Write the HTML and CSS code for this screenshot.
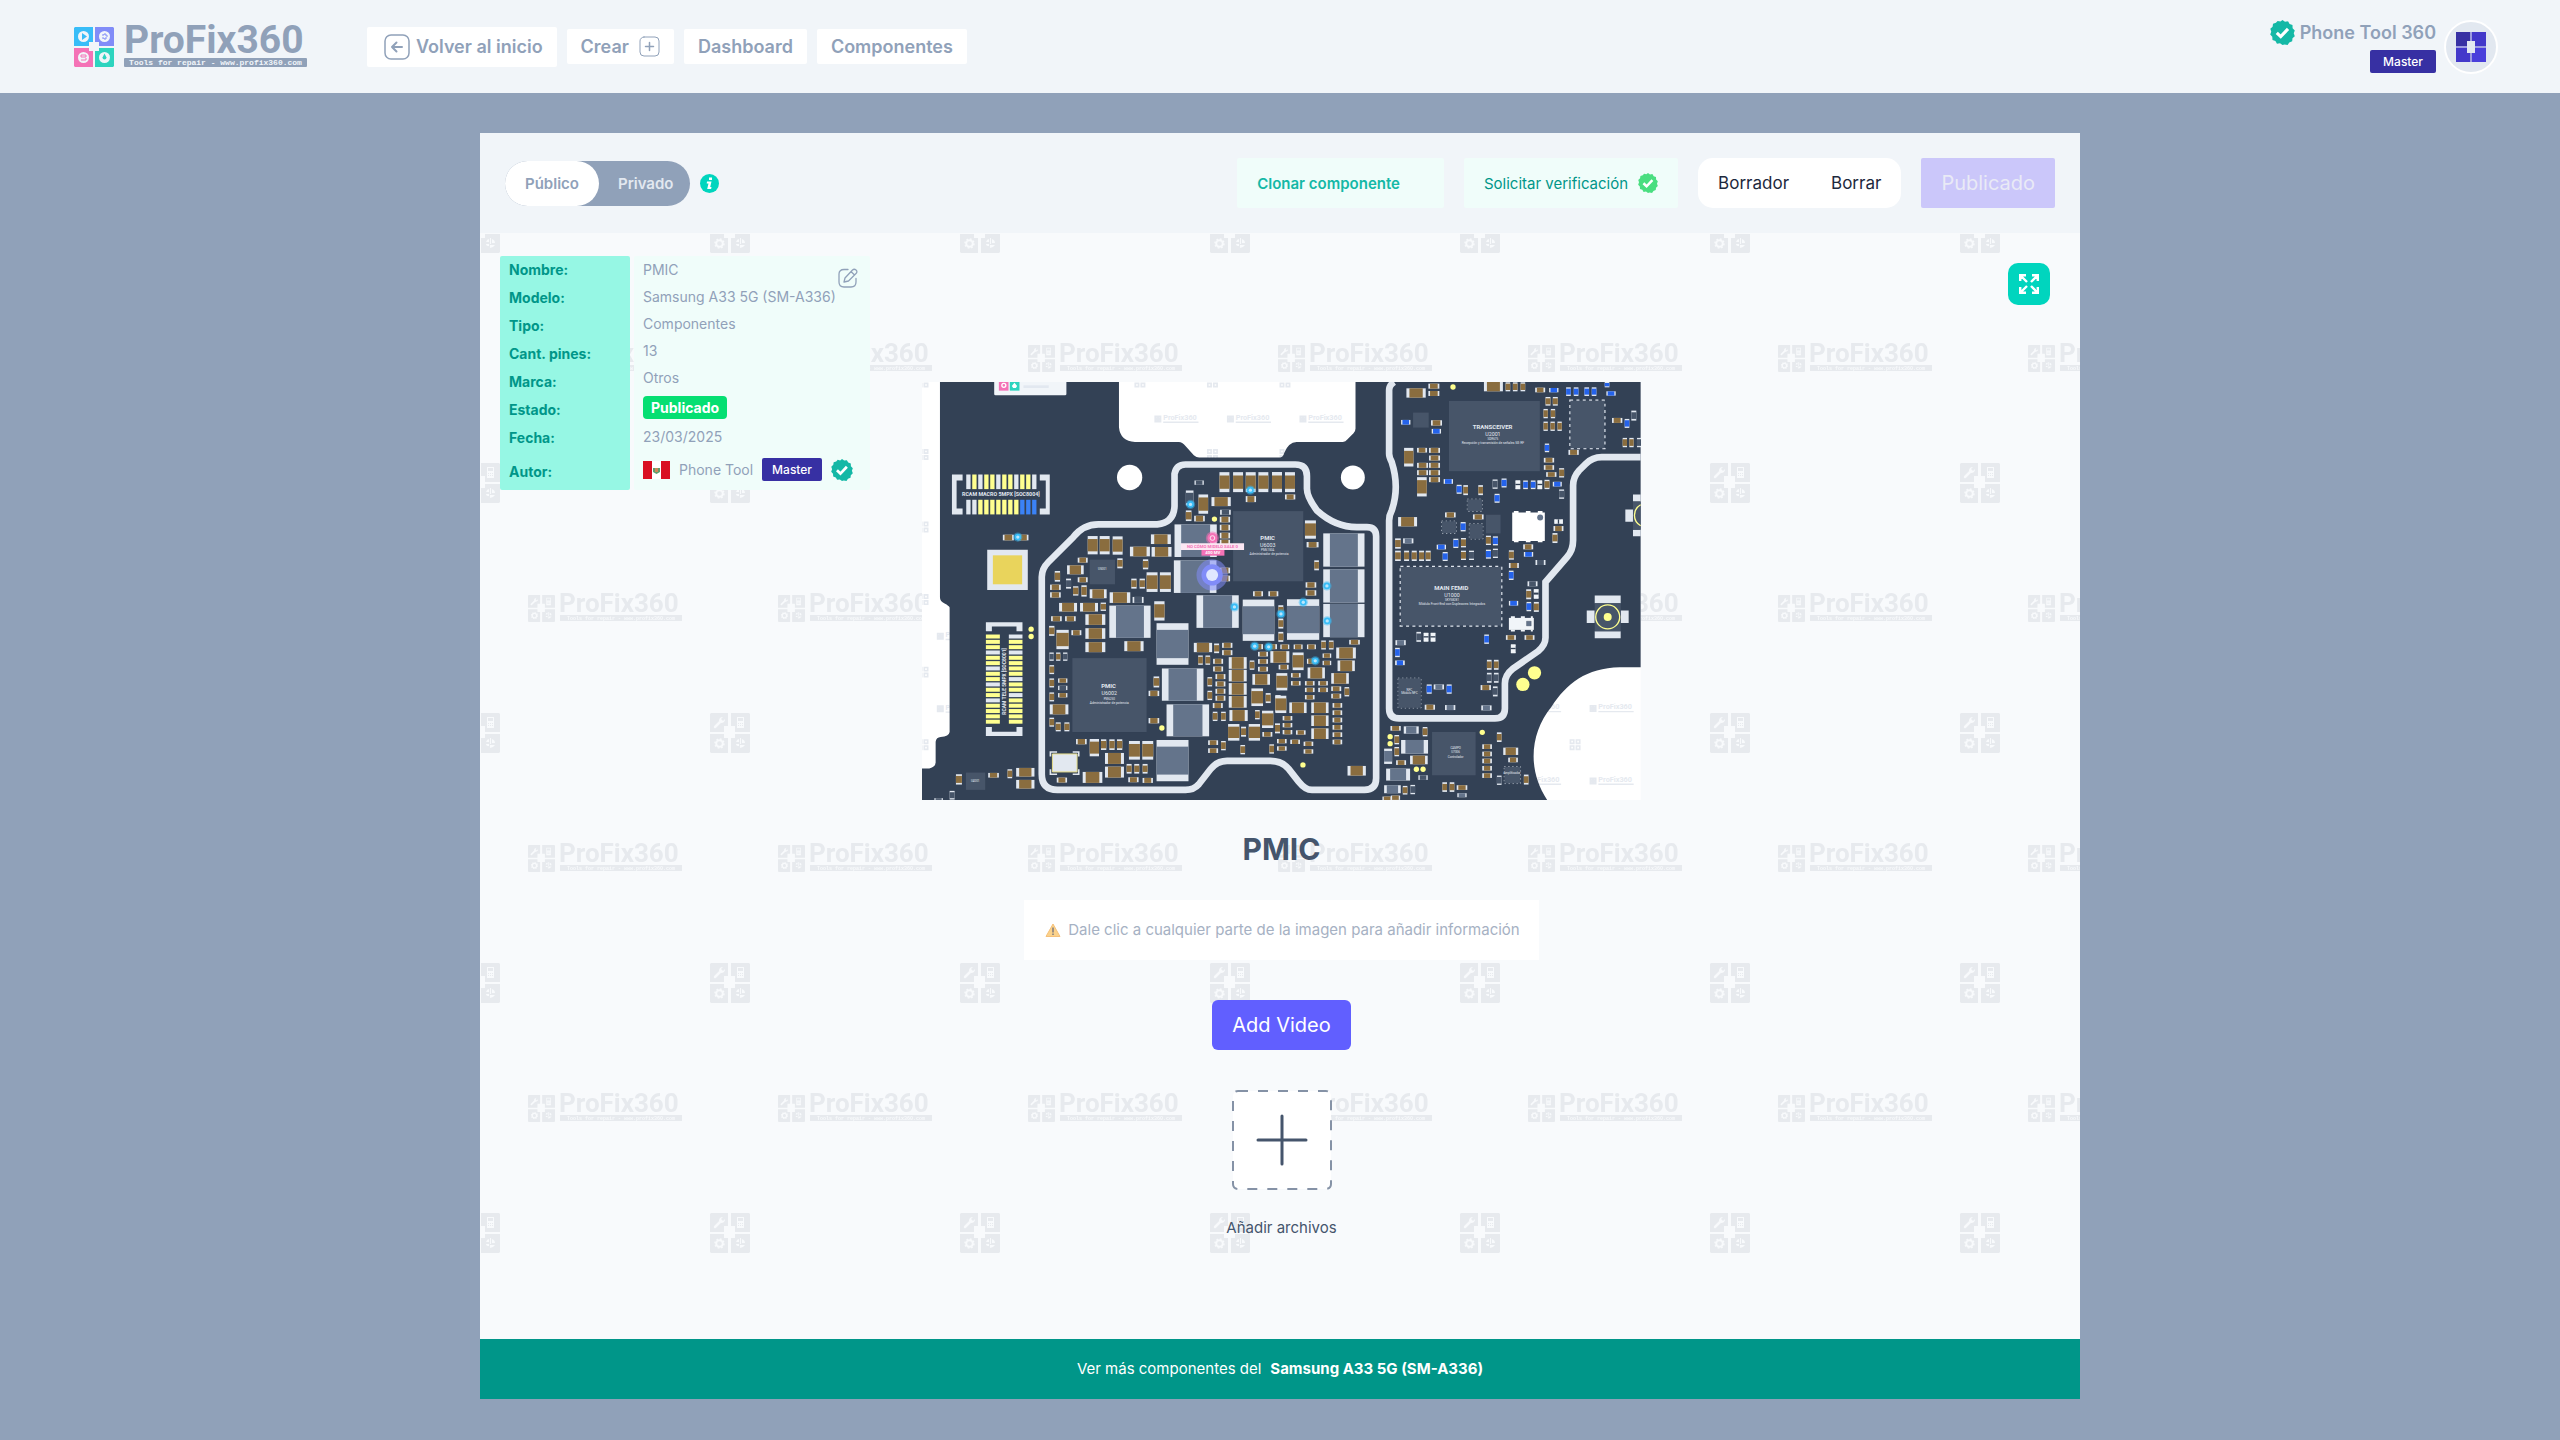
FILE: index.html
```html
<!DOCTYPE html>
<html lang="es">
<head>
<meta charset="utf-8">
<meta name="viewport" content="width=device-width, initial-scale=1">
<title>PMIC - ProFix360</title>
<link rel="stylesheet" href="styles.css">
</head>
<body>
<svg class="sprite" aria-hidden="true">
  <defs>
    <symbol id="verified" viewBox="0 0 24 24">
      <path fill="currentColor" d="M12 0l2.4 1.7 2.9-.4 1.5 2.6 2.8 1 .1 3 2.1 2.1-1 2.8 1 2.8-2.2 2-.3 2.9-2.8 1-1.6 2.4-2.9-.4L12 24l-2.4-1.7-2.9.4-1.5-2.6-2.8-1-.2-3L.2 14l1-2.8-.9-2.8 2.2-2 .4-2.9 2.8-.9L7.300 .9l2.700.6z"/>
      <path fill="none" stroke="#fff" stroke-width="3" d="M6.500 12.300l3.800 3.600 7-7.400"/>
    </symbol>
    <symbol id="tiles" viewBox="0 0 40 40">
      <path fill="#e7eaee" d="M1 0h17v13h-4v6H0V1zM21 0h18l1 1v18H25v-6h-4zM0 21h14v4h4v15H1l-1-1zM25 21h15v18l-1 1H21V25h4z"/>
      <path stroke="#f8fafc" stroke-width="2.500" stroke-linecap="round" d="M5 14l6-6"/>
      <path fill="#f8fafc" d="M9 8q0-4 4-4l-2 2 2 2 2-2q0 4-4 4zM27 4h7v11h-7z"/>
      <path fill="#e7eaee" d="M28 5h5v3h-5zM28 10h1v1h-1zM30 10h1v1h-1zM32 10h1v1h-1zM28 12h1v1h-1zM30 12h1v1h-1zM32 12h1v1h-1z"/>
      <circle cx="9.500" cy="30.500" r="3.300" fill="none" stroke="#f8fafc" stroke-width="2"/>
      <circle cx="9.500" cy="30.500" r="4.500" fill="none" stroke="#f8fafc" stroke-width="1.500" stroke-dasharray="1.800 1.700"/>
      <path fill="#f8fafc" d="M26 29q1-3 3-3v3zM30 25h1v6h-1zM32 26q3 1 3 4h-3zM26 31h3v2q-3 0-3-2zM30 32h5q-2 3-5 3z"/>
    </symbol>
    <pattern id="watermark" x="40" y="100" width="250" height="250" patternUnits="userSpaceOnUse">
      <use href="#tiles" x="190" y="130" width="40" height="40"/>
      <use href="#tiles" x="8" y="12" width="27" height="27"/>
      <text class="wm-name" x="39" y="29">ProFix360</text>
      <path fill="#e7eaee" d="M40 32h122v6H40z"/>
      <text class="wm-tag" x="47" y="37">Tools for repair - www.profix360.com</text>
    </pattern>
    <symbol id="mini" viewBox="0 0 150 30">
      <path fill="none" stroke="#e5e9ef" stroke-width="5" d="M6 7h6v6H6zM16 7h6v6h-6zM6 17h6v6H6zM16 17h6v6h-6z"/>
      <text class="mini-name" x="30" y="18">ProFix360</text>
      <path fill="#e5e9ef" d="M30 23h106v4H30z"/>
    </symbol>
  </defs>
</svg>

<header class="topbar">
  <a class="brand" href="#" aria-label="ProFix360">
    <svg class="brand-mark" viewBox="0 0 40 40" aria-hidden="true">
      <path fill="#38bdf8" d="M1 0h18v19H0V1z"/><path fill="#818cf8" d="M21 0h18l1 1v18H21z"/>
      <path fill="#f472b6" d="M0 21h19v19H1l-1-1z"/><path fill="#2dd4bf" d="M21 21h19v18l-1 1H21z"/>
      <path fill="#f1f5f9" d="M15 15h10v9H15z"/>
      <g fill="#f1f5f9"><circle cx="9.500" cy="9.500" r="5.500"/><circle cx="30.500" cy="9.500" r="5.500"/><circle cx="9.500" cy="30.500" r="5.500"/><circle cx="30.500" cy="30.500" r="5.500"/></g>
      <path fill="#38bdf8" d="M8 6l5 3.500-5 3.500z"/>
      <path fill="none" stroke="#818cf8" d="M28 8h2v-1h2v2h2M28 11h2v1h2v-2"/>
      <path fill="none" stroke="#f472b6" d="M7 28h5v2H7zM7 33h5v-2"/>
      <path fill="#2dd4bf" d="M30.500 26.500l2 4a2 2 0 1 1-4 0z"/>
    </svg>
    <span class="brand-words">
      <span class="brand-name">ProFix360</span>
      <span class="brand-tag">Tools for repair - www.profix360.com</span>
    </span>
  </a>
  <nav class="nav">
    <a class="nav-item nav-back" href="#">
      <svg width="26" height="26" viewBox="0 0 26 26" fill="none" stroke="currentColor" stroke-width="1.500" stroke-linecap="round" stroke-linejoin="round" aria-hidden="true"><rect x="1" y="1" width="24" height="24" rx="6"/><path stroke-width="2" d="M18 13H8M12.500 8.500L8 13l4.500 4.500"/></svg>
      Volver al inicio
    </a>
    <a class="nav-item" href="#">Crear
      <svg width="21" height="21" viewBox="0 0 21 21" fill="none" stroke="currentColor" stroke-linecap="round" aria-hidden="true"><rect x="1" y="1" width="19" height="19" rx="4"/><path stroke-width="1.500" d="M10.500 6.500v8M6.500 10.500h8"/></svg>
    </a>
    <a class="nav-item" href="#">Dashboard</a>
    <a class="nav-item" href="#">Componentes</a>
  </nav>
  <div class="account">
    <div class="account-info">
      <span class="account-name"><svg class="tick-lg" aria-hidden="true"><use href="#verified"/></svg>Phone Tool 360</span>
      <span class="role">Master</span>
    </div>
    <span class="avatar">
      <svg width="30" height="30" viewBox="0 0 30 30" aria-hidden="true"><path fill="#9d9be0" d="M0 0h30v30H0z"/><path fill="#3730a3" d="M0 0h14v14H0z"/><path fill="#4338ca" d="M16 0h14v14H16zM0 16h14v14H0z"/><path fill="#4a3fdb" d="M16 16h14v14H16z"/><path fill="#e2e8f0" d="M11 9h8v12h-8z"/></svg>
    </span>
  </div>
</header>

<main class="panel">
  <div class="toolbar">
    <div class="toggle">
      <button class="toggle-on" type="button">Público</button>
      <button class="toggle-off" type="button">Privado</button>
    </div>
    <svg class="info" width="19" height="19" viewBox="0 0 19 19" aria-hidden="true"><circle cx="9.500" cy="9.500" r="9.500" fill="#00d5be"/><path fill="#fff" d="M9 3.500h3v2.500H9zM7 7.500h4.500l-1.300 5.500h1.300l-.4 2H7.200l1.300-5.500H6.700z"/></svg>
    <div class="actions">
      <button class="action clone" type="button">Clonar componente</button>
      <button class="action verify" type="button">Solicitar verificación <svg class="tick-sm" aria-hidden="true"><use href="#verified"/></svg></button>
      <div class="pair">
        <button type="button">Borrador</button>
        <button type="button">Borrar</button>
      </div>
      <button class="action publish" type="button" disabled>Publicado</button>
    </div>
  </div>

  <section class="stage">
    <svg class="backdrop" aria-hidden="true"><rect width="100%" height="100%" fill="url(#watermark)"/></svg>

    <div class="details">
      <div class="labels">
        <span>Nombre:</span><span>Modelo:</span><span>Tipo:</span><span>Cant. pines:</span><span>Marca:</span><span>Estado:</span><span>Fecha:</span><span class="author-label">Autor:</span>
      </div>
      <div class="values">
        <span>PMIC</span><span>Samsung A33 5G (SM-A336)</span><span>Componentes</span><span>13</span><span>Otros</span>
        <span class="state-row"><b class="state">Publicado</b></span>
        <span>23/03/2025</span>
        <span class="author">
          <svg width="27" height="18" viewBox="0 0 27 18" aria-hidden="true"><path fill="#d91023" d="M0 0h27v18H0z"/><path fill="#fff" d="M9 0h9v18H9z"/><path fill="#5d9e6e" d="M10 7h7v4l-3.500 2L10 11z"/><path fill="#c98a5a" d="M12 7h3v4h-3z"/></svg>
          Phone Tool <span class="role">Master</span>
          <svg class="tick-md" aria-hidden="true"><use href="#verified"/></svg>
        </span>
        <button class="edit" type="button" aria-label="Editar">
          <svg width="20" height="20" viewBox="0 0 20 20" fill="none" stroke="currentColor" stroke-width="1.300" stroke-linejoin="round" stroke-linecap="round" aria-hidden="true"><path d="M10 1.500H6Q1 1.500 1 6v8q0 5 5 5h7q5 0 5-5v-3.500M6 14l1-4 7.500-8q1.700-1.500 3.500 0t0 3.500L10.500 13zM13 3.500l3.500 3.500"/></svg>
        </button>
      </div>
    </div>
    <button class="expand" type="button" aria-label="Pantalla completa">
      <svg width="20" height="20" viewBox="0 0 20 20" fill="none" stroke="#fff" stroke-width="2.400" aria-hidden="true"><path d="M1.200 7V1.200H7M1.500 1.500l6.500 6.500M13 1.200h5.800V7M18.500 1.500L12 8M1.200 13v5.800H7M1.500 18.500L8 12M13 18.800h5.800V13M18.500 18.500L12 12"/></svg>
    </button>

    <svg class="board" id="board" viewBox="33 34 2160 1256" role="img" aria-label="Placa PMIC">
      <path fill="#fff" d="M33 34h2160v1256H33z"/>
      <g id="marks"></g>
      <path fill="#334155" d="M87 34H625V170q4 42 48 44H805q10 0 20 12l25 28q8 7 16 7H1110q8 0 12-14 12-32 37-33H1298q8 0 14-8l18-18q6-6 6-14V34H2193V891H2130C2030 893 1970 940 1925 1010C1860 1090 1852 1200 1912 1290H33V1196H55q18-4 19-18V1115q2-13 15-14 25-2 27-15V712q-2-5-15-12-14-6-14-18z"/>
      <path fill="#f1f5f9" d="M250 34h217v36q0 4-4 4H254q-4 0-4-4z"/>
      <path fill="#f472b6" d="M264 34h29v26h-29z"/><path fill="#2dd4bf" d="M297 34h29v26h-29z"/>
      <path fill="#e2e8f0" d="M338 44h76v8h-76z"/>
      <circle cx="279" cy="44" r="6" fill="none" stroke="#fff" stroke-width="4"/><path fill="#fff" d="M311 36l8 10-4 6h-8l-4-6z"/>
      <circle cx="657" cy="321" r="38" fill="#fff"/><circle cx="1328" cy="321" r="36" fill="#fff"/>
      <g fill="none" stroke="#e2e8f0" stroke-width="20">
        <path d="M825 282H1155q35 0 35 35V355q0 25 30 65 55 50 120 50H1370q28 0 28 28V1225q0 35-35 35H1205q-20 0-40-25l-30-38q-20-24-55-24H950q-30 0-50 25l-35 45q-15 17-40 17H440q-47 0-47-47V620q0-25 20-45l75-75q30-38 75-38H740q50-5 52-55V310q5-28 33-28z"/>
        <path d="M1452 34q-15 10-15 25V250q0 10 8 25 24 75 0 145-8 15-8 30V1015q0 30 30 30H1755q30 0 30-30V940q0-25 25-45l75-52q22-18 22-40V635l65-75q18-20 18-50V345q0-25 18-45l20-20q20-20 48-20H2193"/>
      </g>
      <g id="parts"></g>
      <path fill="#e2e8f0" d="M123 312h32v18h-18v84h18v18h-32zM417 312h-30v18h18v84h-18v18h30zM225 756h110v27h-18v-14h-74v14h-18zM225 1098h110v-27h-18v14h-74v-14h-18z"/>
      <path fill="#e2e8f0" d="M229 538h122v121H229z"/><path fill="#e9d45c" d="M246 555h88v87h-88z"/>
      <path fill="none" stroke="#e2e8f0" stroke-width="5" d="M419 1160v-14h20M486 1146h18v14M504 1198v15h-18M439 1213h-20v-15"/>
      <path fill="#e2e8f0" stroke="#e9e08a" stroke-width="3" d="M425 1152h74v54h-74z"/>
      <g fill="#fff" stroke="#fff" stroke-width="7"><path d="M1807 426h98v86h-98z" stroke="none"/><path stroke-dasharray="14 22" d="M1812 425h90M1812 512h90"/></g>
      <circle cx="1891" cy="441" r="9" fill="#64748b"/>
      <path fill="#f1f5f9" d="M1797 743h75v36h-75z"/><path stroke="#f1f5f9" stroke-width="6" stroke-dasharray="12 18" d="M1803 741h66M1803 781h66"/><path fill="#64748b" stroke="#334155" d="M1850 753h14v14h-14z"/>
      <g fill="#e2e8f0"><path d="M2055 676h78v23h-78zM2055 783h78v21h-78zM2031 721h24v37h-24zM2133 721h24v37h-24zM2170 372h23v21h-23zM2147 417h23v37h-23zM2170 478h23v20h-23z"/></g>
      <path fill="#475569" d="M2055 699h78v84h-78zM2170 393h23v85h-23z"/>
      <g fill="none" stroke="#ffff8f" stroke-width="4"><circle cx="2094" cy="740" r="36"/><path d="M2193 403a36 36 0 0 0 0 63"/></g>
      <g fill="#ffff8f">
        <circle cx="2094" cy="740" r="12"/><circle cx="1874" cy="908" r="20"/><circle cx="1839" cy="943" r="20"/>
        <circle cx="361" cy="777" r="8"/><circle cx="361" cy="799" r="8"/><circle cx="912" cy="446" r="8"/><circle cx="754" cy="1074" r="8"/><circle cx="1178" cy="1185" r="8"/><circle cx="1629" cy="49" r="8"/><circle cx="1440" cy="1100" r="8"/><circle cx="1440" cy="1121" r="8"/><circle cx="1519" cy="1198" r="8"/><circle cx="1539" cy="1198" r="8"/><circle cx="1717" cy="1087" r="8"/>
      </g>
      <g class="chip-text">
        <text class="t16" x="270" y="376">RCAM MACRO 5MPX [SOC8004]</text>
        <text class="t14" transform="translate(285 934) rotate(-90)">RCAM TELE 5MPX [SOC8001]</text>
        <text class="t18" x="594" y="955">PMIC</text><text class="t16n" x="596" y="976">U6002</text><text class="t9" x="596" y="989">PM6250</text><text class="t11" x="596" y="1002">Administrador de potencia</text>
        <text class="t18" x="1072" y="509">PMIC</text><text class="t16n" x="1072" y="529">U6003</text><text class="t9" x="1072" y="541">PM6150A</text><text class="t11" x="1076" y="554">Administrador de potencia</text>
        <text class="t18" x="1748" y="176">TRANSCEIVER</text><text class="t16n" x="1749" y="196">U2001</text><text class="t9" x="1749" y="208">SDR675</text><text class="t11" x="1749" y="220">Recepción y transmisión de señales 5G RF</text>
        <text class="t18" x="1624" y="660">MAIN FEMID</text><text class="t16n" x="1626" y="681">U1000</text><text class="t9" x="1626" y="692">SKY58281</text><text class="t11" x="1626" y="704">Módulo Front-End con Duplexores Integrados</text>
        <text class="t9" x="575" y="600">U5001</text><text class="t9" x="1637" y="1137">CAMPO</text><text class="t9" x="1637" y="1150">U7006</text><text class="t9" x="1637" y="1163">Controlador</text><text class="t9" x="1498" y="963">NFC</text><text class="t9" x="1498" y="973">Módulo NFC</text><text class="t9" x="1806" y="1213">Amplificador</text><text class="t9" x="193" y="1236">U4001</text>
      </g>
      <g id="pins"></g>
      <circle cx="905" cy="614" r="47" fill="#818cf8" opacity=".55"/><circle cx="905" cy="614" r="32" fill="#818cf8"/><circle cx="905" cy="614" r="18" fill="#e0e7ff"/>
      <circle cx="906" cy="503" r="20" fill="#f472b6" opacity=".5"/><circle cx="906" cy="503" r="15" fill="#f472b6"/><circle cx="906" cy="503" r="7" fill="none" stroke="#fce7f3" stroke-width="3"/>
      <path fill="#fce7f3" d="M811 519h190v20H811z"/><path fill="#f472b6" d="M873 539h69v17h-69z"/>
      <text class="tag-a" x="906" y="534">NO CÓMO MIDELO SALE 0</text><text class="tag-b" x="907" y="552">400 MV</text>
    </svg>

    <h1 class="title">PMIC</h1>
    <p class="notice">
      <svg width="16" height="14" viewBox="0 0 16 14" aria-hidden="true"><path fill="#fbd28b" stroke="#f5c07a" d="M8 1l7 12.500H1z"/><path stroke="#7d7a80" stroke-width="1.500" d="M8 4.500v5M8 10.500V12"/></svg>
      Dale clic a cualquier parte de la imagen para añadir información
    </p>
    <button class="add-video" type="button">Add Video</button>
    <button class="upload" type="button" aria-label="Añadir archivos">
      <svg width="100" height="100" viewBox="0 0 100 100" aria-hidden="true"><rect x="1" y="1" width="98" height="98" rx="5" fill="#fff" stroke="#8592a6" stroke-width="2" stroke-dasharray="10 10"/><path stroke="#45556c" stroke-width="3" stroke-linecap="round" d="M50 26v48M26 50h48"/></svg>
    </button>
    <p class="caption">Añadir archivos</p>
  </section>

  <a class="more" href="#">Ver más componentes del <b>Samsung A33 5G (SM-A336)</b></a>
</main>
<script src="board.js"></script>
</body>
</html>
```
FILE: styles.css
```css
* { box-sizing: border-box; }
body {
  margin: 0;
  min-height: 100vh;
  background: #90a1b9;
  color: #90a1b9;
  font-family: Inter, "Liberation Sans", sans-serif;
  font-size: 14px;
}
button { font: inherit; color: inherit; border: 0; padding: 0; background: none; }
a { color: inherit; text-decoration: none; }
svg { display: block; flex: none; }
.sprite { position: absolute; width: 0; height: 0; }

/* Header */
.topbar {
  display: flex;
  align-items: center;
  height: 93px;
  padding: 0 62px 0 74px;
  background: #f1f5f9;
}
.brand { display: flex; gap: 10px; margin-right: 60px; }
.brand-mark { width: 40px; height: 40px; }
.brand-words { display: flex; flex-direction: column; gap: 4px; width: 183px; }
.brand-name { font: 700 39px/27px Roboto, sans-serif; }
.brand-tag {
  height: 9px;
  border-radius: 1px;
  background: #90a1b9;
  color: #f1f5f9;
  font: 700 8px/9px "Liberation Mono", monospace;
  text-align: center;
  white-space: nowrap;
}
.nav { display: flex; align-items: center; gap: 10px; }
.nav-item {
  display: flex;
  align-items: center;
  gap: 10px;
  height: 35px;
  padding: 0 14px;
  border-radius: 2px;
  background: #fff;
  font-size: 18px;
  font-weight: 600;
}
.nav-back { gap: 6px; height: 40px; padding-left: 17px; }
.account { display: flex; align-items: center; gap: 8px; margin-left: auto; }
.account-info { display: flex; flex-direction: column; align-items: flex-end; gap: 5px; }
.account-name { display: flex; align-items: center; gap: 5px; font-size: 18px; font-weight: 600; line-height: 25px; }
.tick-lg { width: 25px; height: 25px; color: #14b8a6; }
.tick-md { width: 22px; height: 22px; color: #14b8a6; }
.tick-sm { width: 20px; height: 20px; color: #4ade80; }
.role {
  padding: 0 13px;
  border-radius: 2px;
  background: #3730a3;
  color: #fff;
  font-size: 12px;
  font-weight: 500;
  line-height: 23px;
}
.avatar {
  display: grid;
  place-items: center;
  width: 54px;
  height: 54px;
  border: 2px solid #fff;
  border-radius: 50%;
  background: #e2e8f0;
}

/* Panel */
.panel { width: 62.5%; margin: 40px auto; background: #f8fafc; }
.toolbar {
  display: flex;
  align-items: center;
  height: 100px;
  padding: 0 25px;
  background: #f1f5f9;
}
.toggle { display: flex; height: 45px; border-radius: 23px; background: #90a1b9; font-size: 15px; font-weight: 600; }
.toggle-on { padding: 0 20px; border-radius: 23px; background: #fff; }
.toggle-off { padding: 0 17px 0 19px; color: #e2e8f0; }
.info { margin-left: 10px; }
.actions { display: flex; gap: 20px; margin-left: auto; }
.action {
  display: flex;
  align-items: center;
  gap: 10px;
  height: 50px;
  padding: 0 20px;
  border-radius: 2px;
  background: #f0fdfa;
  font-size: 15px;
}
.clone { padding-right: 44px; color: #14b8a6; font-weight: 600; }
.verify { color: #009689; }
.pair { display: flex; gap: 42px; padding: 0 20px; border-radius: 15px; background: #fff; color: #1d293d; font-size: 17px; }
.publish { background: #cbc7fa; color: #e9eaf6; font-size: 20px; }

.stage {
  position: relative;
  display: flex;
  flex-direction: column;
  align-items: center;
  padding: 149px 0 101px 3px;
}
.backdrop { position: absolute; inset: 0; width: 100%; height: 100%; }
.wm-name { fill: #e7eaee; font: 700 26px Roboto, sans-serif; }
.wm-tag { fill: #f8fafc; font: 700 5px "Liberation Mono", monospace; }
.mini-name { fill: #e5e9ef; font: 700 22px Roboto, sans-serif; }

.details { position: absolute; top: 23px; left: 20px; display: flex; gap: 4px; height: 234px; }
.labels {
  display: flex;
  flex-direction: column;
  width: 130px;
  padding-left: 9px;
  border-radius: 2px;
  background: #96f7e4;
  color: #009689;
  font-weight: 700;
  line-height: 28px;
}
.author-label { line-height: 40px; }
.values {
  position: relative;
  display: flex;
  flex-direction: column;
  width: 236px;
  padding-left: 9px;
  border-radius: 2px;
  background: #f0fdfa;
  line-height: 27px;
}
.state-row { display: flex; align-items: center; height: 32px; }
.state { padding: 0 8px; border-radius: 4px; background: #05df72; color: #fff; line-height: 23px; }
.author { display: flex; align-items: center; gap: 9px; height: 39px; }
.author .role { padding: 0 10px; }
.edit { position: absolute; top: 12px; right: 12px; }
.expand {
  position: absolute;
  top: 30px;
  right: 30px;
  display: grid;
  place-items: center;
  width: 42px;
  height: 42px;
  border-radius: 10px;
  background: #00d5be;
}

.board { position: relative; width: 45%; }
.title { position: relative; margin: 31px 0 0; color: #45556c; font-size: 30px; font-weight: 700; line-height: 36px; }
.notice {
  position: relative;
  display: flex;
  align-items: center;
  gap: 7px;
  height: 60px;
  margin: 33px 0 40px;
  padding: 0 19px 0 21px;
  background: #fff;
  color: #a6b1c3;
  font-size: 15px;
}
.add-video {
  position: relative;
  height: 50px;
  padding: 0 20px;
  border-radius: 6px;
  background: #615fff;
  color: #fff;
  font-size: 20px;
}
.upload { position: relative; margin: 40px 0 28px; }
.caption { position: relative; margin: 0; color: #45556c; font-size: 15px; line-height: 20px; }

.more {
  display: flex;
  align-items: center;
  justify-content: center;
  gap: 9px;
  height: 60px;
  background: #009689;
  color: #fff;
  font-size: 15px;
}

/* Board lettering */
.chip-text { fill: #e2e8f0; font-family: Roboto, sans-serif; text-anchor: middle; }
.t18 { font-size: 18px; font-weight: 700; }
.t16 { font-size: 16px; font-weight: 700; }
.t16n { font-size: 16px; }
.t14 { font-size: 15px; font-weight: 700; }
.t11 { font-size: 10px; }
.t9 { font-size: 9px; }
.tag-a, .tag-b { font: 700 13px Roboto, sans-serif; text-anchor: middle; fill: #f472b6; }
.tag-b { fill: #fff; }
```
FILE: board.js
```js
// Parts of the board: "x y w h", entries split by commas. A short entry "x y"
// repeats the size of the entry before it. Long side sets the direction.
const NS = 'http://www.w3.org/2000/svg';
const parts = document.getElementById('parts');
const add = (parent, tag, attrs) => {
  const el = document.createElementNS(NS, tag);
  for (const k in attrs) el.setAttribute(k, attrs[k]);
  parent.appendChild(el);
};
const read = (list, dx, draw) => {
  let w = 0, h = 0;
  list.split(',').forEach(s => {
    const v = s.trim().split(/\s+/).map(Number);
    if (v.length > 2) { w = v[2]; h = v[3]; }
    draw(v[0] + dx, v[1], w, h);
  });
};
const rect = (x, y, width, height, fill) => add(parts, 'rect', { x, y, width, height, fill });
const caps = (fill, dx, list, end = '#e2e8f0') => read(list, dx, (x, y, w, h) => {
  const t = Math.round(Math.max(w, h) * 0.16);
  rect(x, y, w, h, end);
  if (w >= h) rect(x + t, y, w - 2 * t, h, fill);
  else rect(x, y + t, w, h - 2 * t, fill);
});
const brown = '#8a6d3f', slate = '#64748b', grey = '#475569', blue = '#2563eb', R = 1080;

read('968 422 211 211,485 864 223 222,537 568 76 74,165 1208 58 52,1617 91 273 211,1509 126 47 45,1728 433 44 56,1566 1086 131 130', 0,
  (x, y, w, h) => rect(x, y, w, h, grey));
read('392 590 302 176,902 90 102 143,593 387 43 35,516 453 42 35,599 461 39 44,385 925 67 88,704 1191 47 49', R, (x, y, w, h) => {
  const big = w > 80;
  add(parts, 'rect', { x: x - 1, y: y - 1, width: w + 2, height: h + 2, fill: 'none', stroke: '#e2e8f0', 'stroke-width': big ? 5 : 2, 'stroke-dasharray': big ? '9 10' : '4 8' });
  rect(x, y, w, h, grey);
});

caps(slate, 0, '792 462 127 98,790 570 128 98,858 675 127 98,596 706 124 97,997 688 95 124,738 759 96 125,754 895 125 97,768 1003 128 96,738 1110 96 124');
caps(slate, R, '159 489 124 100,159 597 124 100,159 701 124 100,50 687 97 122,393 1110 81 41,348 1196 72 36,401 1069 45 22,342 1246 50 24,342 1136 24 46');

caps(brown, 0, `927 305 30 60,968 305,1006 305,1044 305,1085 305,1006 377 31 18,864 372 29 58,903 380 58 27,826 420 17 32,851 436 32 17,
928 439 31 17,928 463,928 487,928 508,928 592,928 616,531 497 30 55,567 497,606 498,721 492 60 29,723 530,658 529,501 562 30 15,620 564 16 30,697 567,
469 585 50 27,432 602 16 32,501 621 30 15,487 648 16 28,512 645 16 34,418 643 32 16,418 666,537 657 51 27,597 666 62 32,708 606 33 59,748 606,
662 625 16 30,687 625,445 698 54 26,508 698,570 697 16 25,421 738 32 15,463 738,524 732 60 32,524 774,524 816 60 30,731 693 31 58,415 767 16 30,
437 779 37 58,482 780 30 15,641 813 58 30,436 847 13 25,416 885 14 27,416 925,416 967,416 1043,442 925 28 13,442 969,417 1003 56 30,435 1057 15 27,461 1057,
729 919 17 33,714 962 32 16,714 1044,496 1107,537 1107 28 52,571 1108 16 32,596 1108,619 1108,655 1113 33 56,695 1113,583 1149 57 33,583 1190,
648 1182 15 29,671 1182,696 1182,653 1222 31 15,696 1224,438 1223,516 1206 59 33,316 1194 55 26,316 1230,290 1198 14 27,232 1209 32 14,135 1213 18 31,
276 493 33 17,320 493,850 818 55 28,911 820 15 29,935 818 31 15,935 840,863 856 14 28,885 856,908 866 30 15,908 889,915 912,915 934,915 956,915 977,
907 999,907 1025 14 28,932 1025,891 921,891 962,955 861 54 35,955 899,955 939,955 978,957 1020 55 33,1018 871 14 28,1043 845 30 14,1043 867,1043 890,
1026 912 53 32,1023 955 35 53,1066 969 15 30,1055 1022 34 52,1034 1020 14 28,953 1062 34 50,992 1070 15 30,1015 1062 34 50,1056 1086 30 14,893 1111,893 1135,
932 1113 14 28,990 1125,1077 1123,1028 663 30 15,1074 663,1095 975 16 50,1028 822 30 15,1070 822`);
caps(brown, R, `5 305 30 60,44 305,44 372 31 15,104 450 33 55,109 515 36 16,132 570 14 30,106 636 32 16,106 660,24 705 15 30,24 745,24 785,30 823 27 14,70 823,110 823,
153 811 14 27,176 811,237 809 32 14,0 843 57 35,67 847 33 53,110 866 27 15,157 850 26 13,157 872,198 832 59 33,202 871 52 32,25 884 30 14,112 892 52 33,
62 909 29 13,62 933,104 933,104 953,104 975,144 933,144 953,183 909 53 32,183 949 30 14,183 971,223 951 14 28,18 909 33 52,15 977,57 997 52 32,123 997,
123 1036,123 1075,187 999 29 14,187 1021,187 1043,187 1065,187 1087,187 1109,37 1038 29 13,37 1059,37 1080,77 1081,20 1107,20 1129,60 1109,100 1115,100 1138,
14 1060 15 30,232 1188 55 29,409 53 58 28,475 39 33 15,475 61,642 34 57 28,707 35 14 27,729 35,752 35,796 51 30 14,827 79 15 26,849 79,821 115 13 28,843 115,
821 153,842 153,863 153,483 149 33 16,402 232 28 56,441 232 30 14,477 232 33 15,477 255,477 277,477 299,477 320,441 277,441 299,441 320 29 58,580 344 14 30,
625 344,822 262 31 14,822 284,829 305,868 293 15 28,824 328,384 440 57 28,525 426 32 15,609 432,375 504 17 31,375 541,402 541 15 31,425 541,447 541,467 541,
573 503 15 28,573 541,648 496,717 540,717 578 30 15,760 522,851 467,848 488 15 30,769 657,792 695,708 795 30 14,764 795,651 869 14 30,672 869,632 945 31 15,
464 1004,896 238,1027 142,1059 202 13 28,1079 202,361 1068 31 14,373 1095 14 28,373 1131,378 1171 30 14,458 1071 14 28,420 1157 53 26,517 1237 14 29,539 1237,
560 1246 32 14,398 1248 14 26,362 1277 28 13,337 1280,681 1087 14 29,700 1133 45 22,715 1163 29 14,637 1123,637 1145,637 1166,637 1188,637 1210,762 1214 14 30`);
caps(grey, 0, '826 360 23 45,929 418 32 15,852 330 28 13,466 625 15 30,666 680 33 18,416 847 13 25,457 847,442 947 28 13,116 1263 15 26,70 1285 26 5');
caps(grey, R, '1085 120 15 30,1102 202 13 28,668 327 15 28,868 357,597 541,669 535,797 569 30 15,773 633,439 785 14 30,651 908,672 908,669 949,421 1245 14 28,445 1216 28 14,681 1217 14 28');
caps(slate, R, '399 504 31 15,376 810,491 943,525 1005,634 1006,562 1270 28 12');
caps(blue, R, `838 52 28 13,889 50 14 26,912 50,944 50,966 50,1010 62 28 13,1005 34 14 16,1065 145 14 27,393 148 28 14,485 175,825 219 13 26,521 326 28 14,
560 343 15 27,695 324,674 370,760 330 14 26,783 330,849 334 27 14,572 455 15 28,550 505,500 523 28 14,518 545 15 27,669 498,648 538,762 545 28 14,
717 601 14 28,717 692 28 14,770 695 14 28,643 793,375 833,375 871 29 14,470 943 15 28,530 943`);
caps('#334155', R, '737 330 14 26,803 330,854 447 25 13,792 657 14 28,461 788 14 26,482 788,723 823');
read('737 330 14 26,803 330,854 447 25 13,792 657 14 28,461 788 14 26,482 788,723 823', R, (x, y, w, h) => {
  if (h > w) { rect(x, y, w, 10, '#f1f5f9'); rect(x, y + h - 12, w, 12, '#f1f5f9'); }
  else { rect(x, y, 10, h, '#f1f5f9'); rect(x + w - 11, y, 11, h, '#f1f5f9'); }
});

// Camera connectors
const tone = { w: '#e2e8f0', y: '#ffff8f', b: '#3b82f6' };
const bars = (codes, x, y, w, h, sx, sy) => [...codes].forEach((c, i) => rect(x + i * sx, y + i * sy, w, h, tone[c]));
bars('wywyywyywyyw', 166, 312, 13, 44, 18, 0);
bars('wwyyyyyyybbb', 166, 388, 13, 44, 18, 0);
bars('yyywyywyywyywyyyy', 225, 793, 42, 12, 0, 16);
bars('wyywyyyywyywyyyyy', 294, 793, 41, 12, 0, 16);

// Measuring points
const pins = document.getElementById('pins');
[[1020, 359], [840, 402], [321, 500], [972, 710], [1033, 828], [1075, 830], [1112, 731], [1179, 696], [1250, 647], [1251, 752], [1215, 872]].forEach(([cx, cy]) => {
  add(pins, 'circle', { cx, cy, r: 14, fill: '#38bdf8', opacity: 0.45 });
  add(pins, 'circle', { cx, cy, r: 10, fill: '#38bdf8' });
  add(pins, 'circle', { cx, cy, r: 5, fill: '#bae6fd' });
});

// Faint logos on the open areas of the photo
const marks = document.getElementById('marks');
const mark = (x, y) => add(marks, 'use', { href: '#mini', x, y, width: 150, height: 30 });
[[728, 130], [946, 130], [1164, 130], [2036, 1000], [2036, 1218], [1818, 1000], [1818, 1218], [74, 783], [74, 1001]].forEach(p => mark(...p));
const quad = (x, y) => add(marks, 'path', { d: `M${x} ${y}h10v10h-10zM${x + 18} ${y}h10v10h-10zM${x} ${y + 18}h10v10h-10zM${x + 18} ${y + 18}h10v10h-10z`, fill: 'none', stroke: '#e5e9ef', 'stroke-width': 5 });
[[674, 20], [892, 20], [1110, 20], [892, 238], [1110, 238], [22, 20], [22, 238], [22, 456], [22, 674], [22, 892], [22, 1110], [1982, 1110]].forEach(p => quad(...p));
```
